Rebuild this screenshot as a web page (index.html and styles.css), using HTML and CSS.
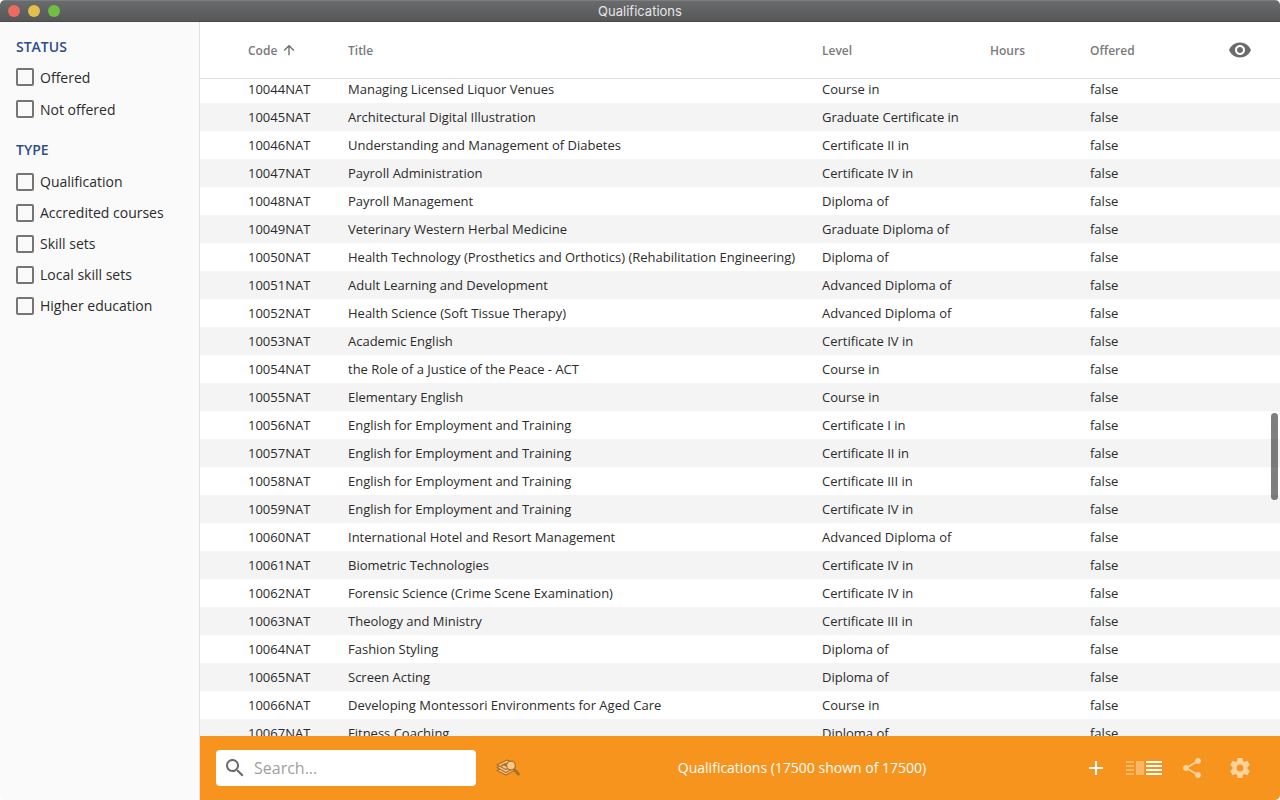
FILE: index.html
```html
<!DOCTYPE html>
<html lang="en">
<head>
<meta charset="utf-8">
<title>Qualifications</title>
<link rel="stylesheet" href="styles.css">
</head>
<body>
<div class="window">
  <header class="titlebar">
    <div class="lights"><span class="light red"></span><span class="light yellow"></span><span class="light green"></span></div>
    <h1 class="titlebar-text">Qualifications</h1>
  </header>
  <div class="body">
    <aside class="sidebar">
      <fieldset class="group status">
        <legend>STATUS</legend>
        <label class="check"><input type="checkbox">Offered</label>
        <label class="check"><input type="checkbox">Not offered</label>
      </fieldset>
      <fieldset class="group type">
        <legend>TYPE</legend>
        <label class="check"><input type="checkbox">Qualification</label>
        <label class="check"><input type="checkbox">Accredited courses</label>
        <label class="check"><input type="checkbox">Skill sets</label>
        <label class="check"><input type="checkbox">Local skill sets</label>
        <label class="check"><input type="checkbox">Higher education</label>
      </fieldset>
    </aside>
    <main class="main">
      <div class="list">
        <table class="grid">
          <colgroup><col class="c-code"><col><col class="c-level"><col class="c-hours"><col class="c-offered"><col class="c-eye"></colgroup>
          <thead>
            <tr>
              <th><span class="sort">Code <svg width="16" height="16" viewBox="0 0 24 24" aria-hidden="true"><path d="M4 12l1.410 1.410L11 7.830V20h2V7.830l5.580 5.590L20 12l-8-8-8 8z"/></svg></span></th>
              <th>Title</th><th>Level</th><th>Hours</th><th>Offered</th>
              <th class="eye-cell"><button class="icon-btn" aria-label="Choose columns"><svg width="24" height="24" viewBox="0 0 24 24"><path d="M12 4.500C7 4.500 2.730 7.610 1 12c1.730 4.390 6 7.500 11 7.500s9.270-3.110 11-7.500c-1.730-4.390-6-7.500-11-7.500zM12 17c-2.760 0-5-2.240-5-5s2.240-5 5-5 5 2.240 5 5-2.240 5-5 5zm0-8c-1.660 0-3 1.340-3 3s1.340 3 3 3 3-1.340 3-3-1.340-3-3-3z"/></svg></button></th>
            </tr>
          </thead>
          <tbody>
            <tr><td>10044NAT</td><td>Managing Licensed Liquor Venues</td><td>Course in</td><td></td><td>false</td><td></td></tr>
            <tr><td>10045NAT</td><td>Architectural Digital Illustration</td><td>Graduate Certificate in</td><td></td><td>false</td><td></td></tr>
            <tr><td>10046NAT</td><td>Understanding and Management of Diabetes</td><td>Certificate II in</td><td></td><td>false</td><td></td></tr>
            <tr><td>10047NAT</td><td>Payroll Administration</td><td>Certificate IV in</td><td></td><td>false</td><td></td></tr>
            <tr><td>10048NAT</td><td>Payroll Management</td><td>Diploma of</td><td></td><td>false</td><td></td></tr>
            <tr><td>10049NAT</td><td>Veterinary Western Herbal Medicine</td><td>Graduate Diploma of</td><td></td><td>false</td><td></td></tr>
            <tr><td>10050NAT</td><td>Health Technology (Prosthetics and Orthotics) (Rehabilitation Engineering)</td><td>Diploma of</td><td></td><td>false</td><td></td></tr>
            <tr><td>10051NAT</td><td>Adult Learning and Development</td><td>Advanced Diploma of</td><td></td><td>false</td><td></td></tr>
            <tr><td>10052NAT</td><td>Health Science (Soft Tissue Therapy)</td><td>Advanced Diploma of</td><td></td><td>false</td><td></td></tr>
            <tr><td>10053NAT</td><td>Academic English</td><td>Certificate IV in</td><td></td><td>false</td><td></td></tr>
            <tr><td>10054NAT</td><td>the Role of a Justice of the Peace - ACT</td><td>Course in</td><td></td><td>false</td><td></td></tr>
            <tr><td>10055NAT</td><td>Elementary English</td><td>Course in</td><td></td><td>false</td><td></td></tr>
            <tr><td>10056NAT</td><td>English for Employment and Training</td><td>Certificate I in</td><td></td><td>false</td><td></td></tr>
            <tr><td>10057NAT</td><td>English for Employment and Training</td><td>Certificate II in</td><td></td><td>false</td><td></td></tr>
            <tr><td>10058NAT</td><td>English for Employment and Training</td><td>Certificate III in</td><td></td><td>false</td><td></td></tr>
            <tr><td>10059NAT</td><td>English for Employment and Training</td><td>Certificate IV in</td><td></td><td>false</td><td></td></tr>
            <tr><td>10060NAT</td><td>International Hotel and Resort Management</td><td>Advanced Diploma of</td><td></td><td>false</td><td></td></tr>
            <tr><td>10061NAT</td><td>Biometric Technologies</td><td>Certificate IV in</td><td></td><td>false</td><td></td></tr>
            <tr><td>10062NAT</td><td>Forensic Science (Crime Scene Examination)</td><td>Certificate IV in</td><td></td><td>false</td><td></td></tr>
            <tr><td>10063NAT</td><td>Theology and Ministry</td><td>Certificate III in</td><td></td><td>false</td><td></td></tr>
            <tr><td>10064NAT</td><td>Fashion Styling</td><td>Diploma of</td><td></td><td>false</td><td></td></tr>
            <tr><td>10065NAT</td><td>Screen Acting</td><td>Diploma of</td><td></td><td>false</td><td></td></tr>
            <tr><td>10066NAT</td><td>Developing Montessori Environments for Aged Care</td><td>Course in</td><td></td><td>false</td><td></td></tr>
            <tr><td>10067NAT</td><td>Fitness Coaching</td><td>Diploma of</td><td></td><td>false</td><td></td></tr>
          </tbody>
        </table>
        <div class="thumb"></div>
      </div>
      <footer class="toolbar">
        <label class="search">
          <svg width="24" height="24" viewBox="0 0 24 24" aria-hidden="true"><path d="M15.500 14h-.79l-.28-.27C15.410 12.590 16 11.110 16 9.500 16 5.910 13.090 3 9.500 3S3 5.910 3 9.500 5.910 16 9.500 16c1.610 0 3.090-.59 4.230-1.570l.27.28v.79l5 4.990L20.490 19l-4.990-5zm-6 0C7.010 14 5 11.990 5 9.500S7.010 5 9.500 5 14 7.010 14 9.500 11.990 14 9.500 14z"/></svg>
          <input type="text" placeholder="Search..." aria-label="Search">
        </label>
        <button class="icon-btn" aria-label="Advanced search">
          <svg width="24" height="18" viewBox="0 0 24 18" fill="none" stroke="#a9702a" stroke-width="1.200" stroke-linejoin="round">
            <path fill="#fbc98a" d="M1 11.500L11 6l8 5-9 5z"/>
            <path fill="#fbc98a" d="M1 8.500L11 3.500l8 5-9 5z"/>
            <path fill="#fbc98a" d="M1 6L11 1l8 4.500-9 5z"/>
            <path d="M5 7l5-2.500-1 2h3" stroke-width="1.600"/>
            <circle cx="15" cy="6.500" r="4.400" fill="#fcc88a"/>
            <path d="M18.800 11l3.500 4" stroke-width="3" stroke-linecap="round"/>
          </svg>
        </button>
        <p class="count">Qualifications (17500 shown of 17500)</p>
        <div class="actions">
          <button class="icon-btn" aria-label="Add"><svg width="24" height="24" viewBox="0 0 24 24" fill="#fff"><path d="M19 13h-6v6h-2v-6H5v-2h6V5h2v6h6v2z"/></svg></button>
          <div class="views">
            <button class="icon-btn faded" aria-label="Split view"><svg width="18" height="14" viewBox="0 0 18 14"><path d="M0 0h8v2H0zM0 4h8v2H0zM0 8h8v2H0zM0 12h8v2H0zM10 0h8v14h-8z"/></svg></button>
            <button class="icon-btn" aria-label="List view"><svg width="16" height="14" viewBox="0 0 16 14" fill="#fff"><path d="M0 0h16v2H0zM0 4h16v2H0zM0 8h16v2H0zM0 12h16v2H0z"/></svg></button>
          </div>
          <button class="icon-btn soft" aria-label="Share"><svg width="24" height="24" viewBox="0 0 24 24"><path d="M18 16.080c-.76 0-1.440.3-1.960.77L8.910 12.700c.05-.23.09-.46.09-.7s-.04-.47-.09-.7l7.050-4.110c.54.5 1.250.81 2.040.81 1.660 0 3-1.340 3-3s-1.340-3-3-3-3 1.340-3 3c0 .24.04.47.09.7L8.040 9.810C7.500 9.310 6.790 9 6 9c-1.660 0-3 1.340-3 3s1.340 3 3 3c.79 0 1.500-.31 2.040-.81l7.120 4.160c-.05.21-.08.43-.08.65 0 1.610 1.310 2.920 2.920 2.920s2.920-1.310 2.920-2.920-1.310-2.920-2.920-2.920z"/></svg></button>
          <button class="icon-btn soft settings" aria-label="Settings"><svg width="24" height="24" viewBox="0 0 24 24"><path d="M19.430 12.980c.04-.32.07-.64.07-.98s-.03-.66-.07-.98l2.110-1.650c.19-.15.24-.42.12-.64l-2-3.460c-.12-.22-.39-.3-.61-.22l-2.490 1c-.52-.4-1.080-.73-1.690-.98l-.38-2.650C14.460 2.180 14.250 2 14 2h-4c-.25 0-.46.18-.49.42l-.38 2.650c-.61.25-1.170.59-1.690.98l-2.490-1c-.23-.09-.49 0-.61.22l-2 3.460c-.13.22-.07.49.12.64l2.110 1.650c-.04.32-.07.65-.07.98s.03.66.07.98l-2.110 1.650c-.19.15-.24.42-.12.64l2 3.460c.12.22.39.3.61.22l2.490-1c.52.4 1.080.73 1.690.98l.38 2.650c.03.24.24.42.49.42h4c.25 0 .46-.18.49-.42l.38-2.650c.61-.25 1.170-.59 1.690-.98l2.490 1c.23.09.49 0 .61-.22l2-3.460c.12-.22.07-.49-.12-.64l-2.110-1.650zM12 15.500c-1.930 0-3.500-1.570-3.500-3.500s1.570-3.500 3.500-3.500 3.500 1.570 3.500 3.500-1.570 3.500-3.500 3.500z"/></svg></button>
        </div>
      </footer>
    </main>
  </div>
</div>
</body>
</html>
```
FILE: styles.css
```css
* { box-sizing: border-box; }
body {
  margin: 0;
  background: #fff;
  font-family: "Open Sans", "Noto Sans", sans-serif;
  color: #2b2b2b;
}
.window {
  display: flex;
  flex-direction: column;
  height: 100vh;
  border-radius: 5px;
  overflow: hidden;
}
.titlebar {
  display: grid;
  grid-template-columns: 1fr auto 1fr;
  align-items: center;
  height: 22px;
  padding: 0 8px;
  background: linear-gradient(#6a6b6d, #565759);
  border-top: 1px solid #7d7e80;
  border-bottom: 1px solid #4a4a4b;
}
.lights { display: flex; gap: 8px; }
.light { width: 12px; height: 12px; border-radius: 50%; }
.red { background: #ed6a5e; }
.yellow { background: #e0c04c; }
.green { background: #71be47; }
.titlebar-text {
  margin: 0;
  font: 400 13px/20px Inter, sans-serif;
  color: #e6e6e6;
}
.body { display: flex; flex: 1; min-height: 0; }
.sidebar {
  width: 200px;
  padding: 15px 16px;
  background: #fafafa;
  border-right: 1px solid #e0e0e0;
}
.group { margin: 0; padding: 0; border: 0; min-width: 0; }
.group legend {
  padding: 0 0 4px;
  font-size: 14px;
  line-height: 20px;
  font-weight: 600;
  color: #2f4d87;
}
.status { margin-bottom: 15px; }
.type legend { padding-bottom: 6px; }
.check {
  display: flex;
  align-items: center;
  gap: 6px;
  height: 31px;
  font-size: 14px;
  white-space: nowrap;
}
.status .check { height: 32px; }
.check input {
  appearance: none;
  width: 18px;
  height: 18px;
  margin: 0;
  border: 2px solid #757575;
  border-radius: 2px;
}
.main { display: flex; flex: 1; flex-direction: column; min-width: 0; }
.list { position: relative; flex: 1; min-height: 0; overflow: hidden; }
.grid {
  width: 100%;
  table-layout: fixed;
  border-collapse: separate;
  border-spacing: 0;
  font-size: 13px;
}
.c-code { width: 148px; }
.c-level { width: 168px; }
.c-hours { width: 100px; }
.c-offered { width: 110px; }
.c-eye { width: 80px; }
.grid th, .grid td { padding: 0; text-align: left; white-space: nowrap; }
.grid th:first-child, .grid td:first-child { padding-left: 48px; }
.grid th {
  height: 57px;
  border-bottom: 1px solid #e0e0e0;
  font-size: 12px;
  font-weight: 600;
  color: #7a7a7a;
}
.grid th.eye-cell { text-align: center; }
.eye-cell .icon-btn { margin: 0 auto; }
.sort { display: flex; align-items: center; gap: 4px; }
.grid td { height: 28px; line-height: 28px; }
.grid tbody tr:first-child td { height: 24px; line-height: 20px; padding-bottom: 4px; }
.grid tbody tr:nth-child(even) { background: #f4f4f4; }
.sort svg, .eye-cell svg, .search svg { fill: #6b6b6b; }
.thumb {
  position: absolute;
  top: 391px;
  right: 2px;
  width: 7px;
  height: 87px;
  border-radius: 4px;
  background: rgba(0, 0, 0, 0.5);
}
.toolbar {
  display: flex;
  align-items: center;
  height: 64px;
  padding: 0 28px 0 16px;
  background: #f7941d;
}
.search {
  display: flex;
  align-items: center;
  gap: 7px;
  width: 260px;
  height: 36px;
  margin-right: 20px;
  padding: 0 7px;
  border-radius: 4px;
  background: #fff;
}
.search input {
  flex: 1;
  min-width: 0;
  padding: 0;
  border: 0;
  outline: 0;
  background: none;
  font: 400 16px/24px "Open Sans", sans-serif;
}
.search input::placeholder { color: #a0a0a0; opacity: 1; }
.icon-btn {
  display: flex;
  padding: 0;
  border: 0;
  background: none;
}
.count {
  flex: 1;
  margin: 0;
  text-align: center;
  font-size: 14px;
  line-height: 20px;
  color: #fff;
}
.actions { display: flex; align-items: center; gap: 18px; }
.settings { margin-left: 6px; }
.views { display: flex; gap: 2px; }
.faded { fill: #fab766; }
.soft { fill: #fcd3a0; }
```
